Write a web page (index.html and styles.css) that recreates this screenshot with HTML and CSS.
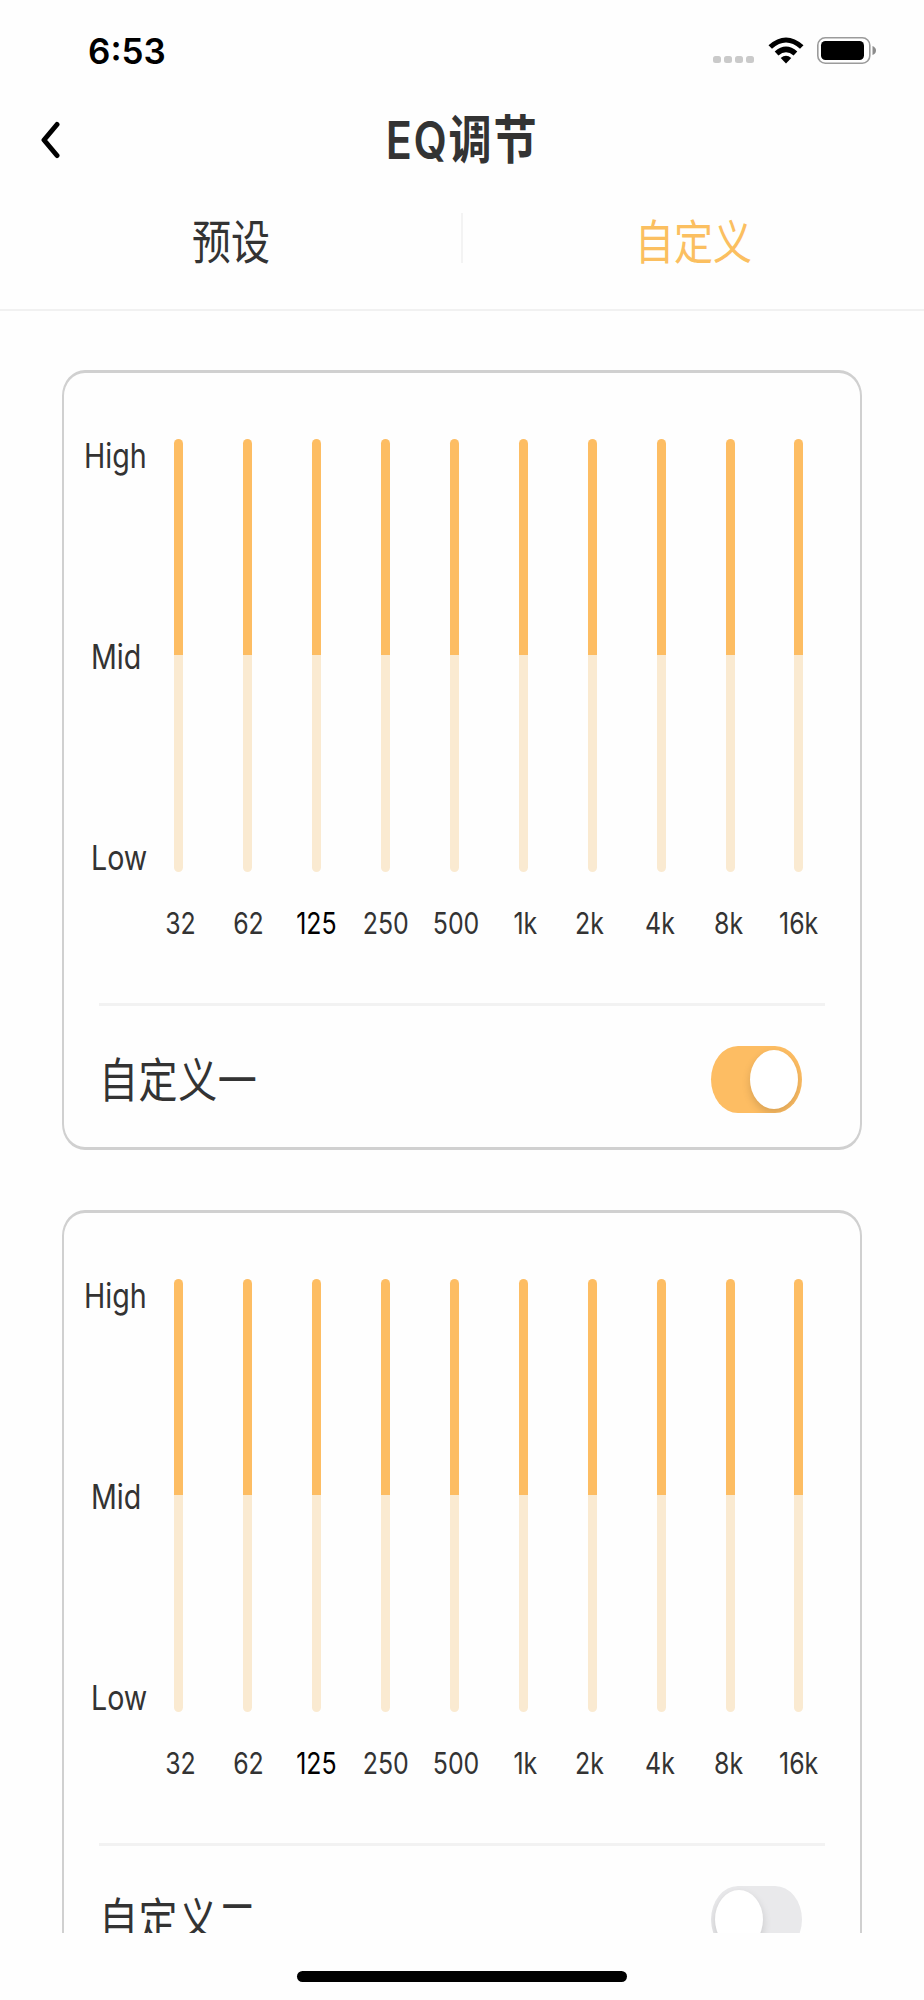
FILE: index.html
```
<!DOCTYPE html>
<html lang="zh-CN">

<head>
    <meta charset="UTF-8">
    <meta name="viewport" content="width=device-width, initial-scale=1.0">
    <title>EQ调节</title>
    <link rel="stylesheet" href="styles.css">
</head>

<body>
    <div class="status-bar">
        <span class="time">6:53</span>
        <div class="status-icons">
            <div class="signal"><i></i><i></i><i></i><i></i></div>
            <svg class="wifi" width="36" height="27" viewBox="0 0 36 27">
                <path d="M0.5 8.2 Q18 -7.4 35.5 8.2 L32 11.8 Q18 -0.8 4 11.8 Z" />
                <path d="M6.7 14.6 Q18 4.4 29.3 14.6 L25.6 18.4 Q18 12 10.4 18.4 Z" />
                <path d="M12.7 21 Q18 16.4 23.3 21 L18 26.6 Z" />
            </svg>
            <svg class="battery" width="60" height="27" viewBox="0 0 60 27">
                <rect x="0.8" y="0.8" width="52" height="25.4" rx="7.5" fill="none" stroke="#9b9b9b" stroke-width="1.6" />
                <rect x="4" y="4" width="43" height="19" rx="4.5" />
                <path d="M55.5 9 Q59 10.5 59 13.5 Q59 16.5 55.5 18 Z" fill="#8c8c8c" />
            </svg>
        </div>
    </div>

    <div class="nav-bar">
        <svg class="back" width="20" height="40" viewBox="0 0 20 40">
            <path d="M17 4.5 L4 20 L17 35.5" />
        </svg>
        <h1 class="title narrow">EQ调节</h1>
    </div>

    <div class="tabs">
        <div class="tab"><span class="narrow">预设</span></div>
        <div class="tab-divider"></div>
        <div class="tab active"><span class="narrow">自定义</span></div>
    </div>

    <div class="content">
        <div class="card">
            <div class="chart">
                <div class="levels">
                    <span class="narrow high">High</span>
                    <span class="narrow">Mid</span>
                    <span class="narrow">Low</span>
                </div>
                <div class="bars">
                    <div class="bar"></div>
                    <div class="bar"></div>
                    <div class="bar"></div>
                    <div class="bar"></div>
                    <div class="bar"></div>
                    <div class="bar"></div>
                    <div class="bar"></div>
                    <div class="bar"></div>
                    <div class="bar"></div>
                    <div class="bar"></div>
                </div>
            </div>
            <div class="freqs">
                <span class="narrow">32</span>
                <span class="narrow">62</span>
                <span class="narrow strong">125</span>
                <span class="narrow">250</span>
                <span class="narrow">500</span>
                <span class="narrow">1k</span>
                <span class="narrow">2k</span>
                <span class="narrow">4k</span>
                <span class="narrow">8k</span>
                <span class="narrow">16k</span>
            </div>
            <div class="card-footer">
                <span class="narrow name">自定义一</span>
                <div class="toggle on"><div class="knob"></div></div>
            </div>
        </div>

        <div class="card">
            <div class="chart">
                <div class="levels">
                    <span class="narrow high">High</span>
                    <span class="narrow">Mid</span>
                    <span class="narrow">Low</span>
                </div>
                <div class="bars">
                    <div class="bar"></div>
                    <div class="bar"></div>
                    <div class="bar"></div>
                    <div class="bar"></div>
                    <div class="bar"></div>
                    <div class="bar"></div>
                    <div class="bar"></div>
                    <div class="bar"></div>
                    <div class="bar"></div>
                    <div class="bar"></div>
                </div>
            </div>
            <div class="freqs">
                <span class="narrow">32</span>
                <span class="narrow">62</span>
                <span class="narrow strong">125</span>
                <span class="narrow">250</span>
                <span class="narrow">500</span>
                <span class="narrow">1k</span>
                <span class="narrow">2k</span>
                <span class="narrow">4k</span>
                <span class="narrow">8k</span>
                <span class="narrow">16k</span>
            </div>
            <div class="card-footer">
                <span class="narrow name">自定义二</span>
                <div class="toggle"><div class="knob"></div></div>
            </div>
        </div>
    </div>

    <div class="home-area">
        <div class="home-indicator"></div>
    </div>
</body>

</html>
```

FILE: styles.css
```
* {
    box-sizing: border-box;
}

body {
    font-family: Inter, "Noto Sans CJK SC", sans-serif;
    background-color: #fefefe;
    color: #333;
    margin: 0;
    height: 2000px;
    display: flex;
    flex-direction: column;
    overflow: hidden;
}

/* condensed lettering */
.narrow {
    display: inline-block;
    white-space: nowrap;
    transform: scaleX(0.83);
}

.status-bar {
    height: 100px;
    padding: 0 47px 0 88px;
    display: flex;
    justify-content: space-between;
    align-items: center;
}

.time {
    font-size: 35px;
    font-weight: 600;
    line-height: 40px;
    color: #000;
    padding-top: 1px;
}

.status-icons {
    display: flex;
    align-items: flex-end;
}

.signal {
    display: flex;
    gap: 3px;
    margin-right: 14px;
    padding-bottom: 1px;
}

.signal i {
    width: 8px;
    height: 7px;
    border-radius: 2.5px;
    background: #cacaca;
}

.wifi {
    margin-right: 13px;
}

.nav-bar {
    height: 80px;
    padding: 0 40px;
    display: grid;
    grid-template-columns: 20px 1fr 20px;
    align-items: center;
}

.back path {
    fill: none;
    stroke: #000;
    stroke-width: 5;
    stroke-linecap: round;
    stroke-linejoin: round;
}

.title {
    margin: 0;
    padding-top: 2px;
    font-size: 52px;
    font-weight: 600;
    line-height: 78px;
    letter-spacing: 2px;
    text-align: center;
}

.tabs {
    height: 131px;
    border-bottom: 2px solid #f1f1f1;
    display: flex;
    align-items: flex-start;
    padding-top: 33px;
}

.tab {
    flex: 1;
    text-align: center;
    font-size: 47px;
    line-height: 58px;
}

.tab.active {
    color: #fbbf60;
}

.tab-divider {
    width: 2px;
    height: 50px;
    background: #f3f3f3;
}

.content {
    height: 1622px;
    padding: 59px 62px 0;
    overflow: hidden;
}

.card {
    height: 780px;
    margin-bottom: 60px;
    padding-top: 66px;
    border: solid #d0d0d0;
    border-width: 3px 2px;
    border-radius: 23px / 26px;
}

.chart {
    height: 445px;
    display: flex;
    align-items: flex-start;
}

.levels {
    width: 110px;
    height: 436px;
    padding-left: 27px;
    display: flex;
    flex-direction: column;
    justify-content: space-between;
    align-items: flex-start;
    font-size: 34.5px;
    line-height: 34px;
}

.levels .narrow,
.name {
    transform-origin: left;
}

.levels .high {
    margin-left: -7px;
}

.bars {
    width: 629.5px;
    height: 433px;
    display: flex;
    justify-content: space-between;
}

.bar {
    width: 9px;
    border-radius: 4.5px;
    background: linear-gradient(#fdbd63 50%, #faead1 50%);
}

.freqs {
    display: grid;
    grid-template-columns: 69px 67px 70px 68px 74px 63px 65px 77px 61px 78px;
    justify-items: center;
    margin-left: 81.5px;
    height: 119px;
    padding-top: 19px;
    font-size: 30px;
    line-height: 40px;
}

.freqs .strong {
    color: #000;
}

.card-footer {
    height: 141px;
    margin: 0 35px;
    padding-right: 23px;
    border-top: 3px solid #f2f2f2;
    display: flex;
    justify-content: space-between;
    align-items: flex-start;
}

.name {
    font-size: 47px;
    line-height: 58px;
    padding-top: 45px;
    letter-spacing: 0.7px;
}

.toggle {
    width: 91px;
    height: 67px;
    margin-top: 40px;
    padding: 4px;
    border-radius: 27px / 33.5px;
    background: #e9e9eb;
    display: flex;
    overflow: hidden;
}

.toggle.on {
    background: #fdbd63;
    justify-content: flex-end;
}

.knob {
    width: 48px;
    height: 59px;
    border-radius: 50%;
    background: #fff;
    box-shadow: 0 4px 8px rgba(0, 0, 0, 0.15);
}

.home-area {
    height: 67px;
    padding-top: 38px;
    display: flex;
    justify-content: center;
}

.home-indicator {
    width: 330px;
    height: 11px;
    border-radius: 5.5px;
    background: #000;
}
```
